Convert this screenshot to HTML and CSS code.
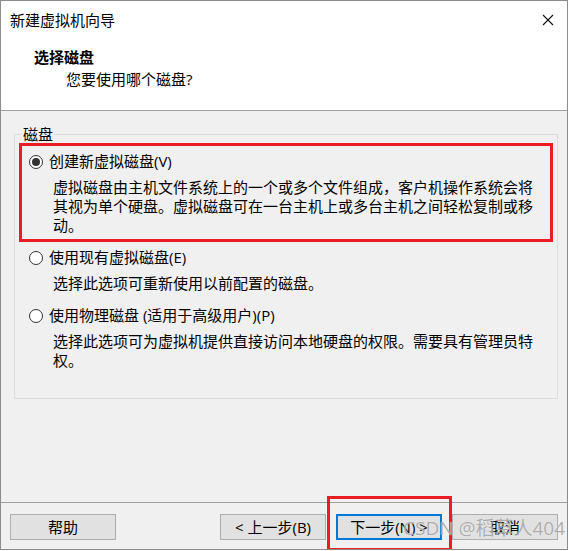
FILE: index.html
```html
<!DOCTYPE html>
<html lang="zh-CN">
<head>
<meta charset="utf-8">
<title>新建虚拟机向导</title>
<link rel="stylesheet" href="styles.css">
</head>
<body>
<div class="window">
  <div class="header">
    <div class="titlebar">
      <span class="title">新建虚拟机向导</span>
      <svg class="close" width="12" height="12" viewBox="0 0 12 12"><path d="M1 1 L11 11 M11 1 L1 11" stroke="#111" stroke-width="1.1" fill="none"/></svg>
    </div>
    <div class="heading">选择磁盘</div>
    <div class="subheading">您要使用哪个磁盘?</div>
  </div>
  <div class="content">
    <div class="group">
      <div class="group-label">磁盘</div>
      <div class="option first">
        <div class="opt-row"><span class="radio checked"></span><span>创建新虚拟磁盘(V)</span></div>
        <div class="desc">虚拟磁盘由主机文件系统上的一个或多个文件组成，客户机操作系统会将其视为单个硬盘。虚拟磁盘可在一台主机上或多台主机之间轻松复制或移动。</div>
      </div>
      <div class="option">
        <div class="opt-row"><span class="radio"></span><span>使用现有虚拟磁盘(E)</span></div>
        <div class="desc">选择此选项可重新使用以前配置的磁盘。</div>
      </div>
      <div class="option">
        <div class="opt-row"><span class="radio"></span><span>使用物理磁盘 (适用于高级用户)(P)</span></div>
        <div class="desc">选择此选项可为虚拟机提供直接访问本地硬盘的权限。需要具有管理员特权。</div>
      </div>
    </div>
  </div>
  <div class="footer">
    <button class="btn">帮助</button>
    <div class="btn-group">
      <button class="btn">&lt; 上一步(B)</button>
      <button class="btn default">下一步(N) &gt;</button>
      <button class="btn">取消</button>
    </div>
  </div>
  <div class="mark mark-option"></div>
  <div class="mark mark-next"></div>
  <div class="watermark">CSDN @稻草人404</div>
</div>
</body>
</html>
```
FILE: styles.css
```css
* { box-sizing: border-box; }
html, body { margin: 0; padding: 0; background: #ffffff; }
body {
  font-family: "Open Sans", "Noto Sans CJK SC", sans-serif;
  font-size: 15px;
  color: #000;
}
.window {
  position: relative;
  width: 568px;
  height: 550px;
  border: 1px solid #8c8c8c;
  background: #f0f0f0;
  display: flex;
  flex-direction: column;
  overflow: hidden;
}
.header {
  height: 110px;
  flex: none;
  background: #fff;
  border-bottom: 1px solid #a0a0a0;
  padding-top: 9px;
}
.titlebar {
  display: flex;
  align-items: center;
  justify-content: space-between;
  height: 20px;
  padding: 0 13px 0 9px;
}
.title { line-height: 20px; }
.close { display: block; }
.heading {
  margin: 17px 0 0 33px;
  line-height: 20px;
  font-weight: bold;
}
.subheading {
  margin: 2px 0 0 65px;
  line-height: 20px;
}
.content {
  flex: 1;
  padding: 23px 0 0 13px;
}
.group {
  width: 544px;
  height: 265px;
  border: 1px solid #dcdcdc;
}
.group-label {
  width: fit-content;
  margin: -10px 0 0 7px;
  padding: 0 1px;
  line-height: 19px;
  background: #f0f0f0;
}
.option { margin-top: 13px; }
.option.first { margin-top: 8px; }
.opt-row {
  display: flex;
  align-items: center;
  height: 19px;
  line-height: 19px;
  padding-left: 14px;
  gap: 6px;
}
.radio {
  width: 14px;
  height: 14px;
  border: 1px solid #333;
  border-radius: 50%;
  background: #fff;
  display: flex;
  align-items: center;
  justify-content: center;
  flex: none;
}
.radio.checked::after {
  content: "";
  width: 8px;
  height: 8px;
  border-radius: 50%;
  background: #333;
}
.desc {
  margin-top: 7px;
  padding-left: 38px;
  width: 525px;
  line-height: 19px;
}
.footer {
  flex: none;
  height: 47px;
  border-top: 1px solid #a0a0a0;
  padding: 11px 9px 0 9px;
  display: flex;
  justify-content: space-between;
  align-items: flex-start;
}
.btn-group { display: flex; gap: 10px; }
.btn {
  width: 106px;
  height: 26px;
  border: 1px solid #adadad;
  background: #e1e1e1;
  font: inherit;
  color: #000;
  padding: 0;
  line-height: 22px;
}
.btn.default { border: 2px solid #0078d7; }
.mark {
  position: absolute;
  border: 3px solid #ec1c24;
}
.mark-option { left: 18px; top: 142px; width: 534px; height: 99px; }
.mark-next { left: 326px; top: 495px; width: 125px; height: 55px; }
.watermark {
  position: absolute;
  left: 402px;
  top: 514px;
  font-size: 19px;
  line-height: 26px;
  color: rgba(120, 120, 120, 0.6);
  text-shadow: 0 0 1px rgba(255, 255, 255, 0.9);
  white-space: nowrap;
}
```
